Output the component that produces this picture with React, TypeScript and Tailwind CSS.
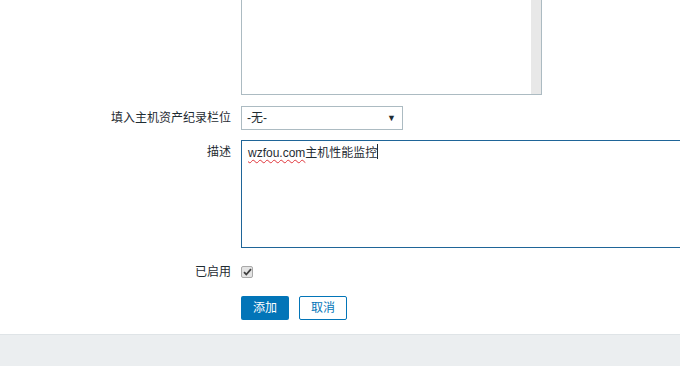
import React from "react";

const font = { fontFamily: '"Liberation Sans", Arial, "Noto Sans CJK SC", sans-serif' };

function Row({ label, children, labelClass = "" }: { label?: string; children: React.ReactNode; labelClass?: string }) {
  return (
    <div className="flex">
      <div className={`w-[241px] shrink-0 pr-[10px] text-right text-[12px] text-[#1f2c33] ${labelClass}`}>{label}</div>
      <div className="flex-1 min-w-0">{children}</div>
    </div>
  );
}

export default function App() {
  return (
    <div className="w-[680px] h-[366px] overflow-hidden bg-white flex flex-col" style={font}>
      <div className="flex flex-col">
        {/* scrolled textarea (top cut off) */}
        <Row>
          <div className="w-[301px] h-[95px] border-x border-b border-[#acbbc2] bg-white flex justify-end">
            <div className="w-[10px] h-full bg-[#e8e8e8]" />
          </div>
        </Row>

        <div className="h-[11px]" />
        <Row label="填入主机资产纪录栏位" labelClass="leading-[24px]">
          <div className="w-[162px] h-[24px] border border-[#acbbc2] bg-white flex items-center justify-between pl-[5px] pr-[6px] text-[12px] text-[#1f2c33]">
            <span>-无-</span>
            <span className="text-[9px] leading-none">▼</span>
          </div>
        </Row>

        <div className="h-[10px]" />
        <Row label="描述" labelClass="pt-[3px]">
          <div className="h-[108px] border border-r-0 border-[#1f6598] bg-white pl-[6px] pt-[3px] text-[12px] text-[#1f2c33] flex items-start">
            <span className="underline decoration-wavy decoration-[#e0353b] decoration-1 underline-offset-2">wzfou.com</span>
            <span>主机性能监控</span>
            <span className="w-px h-[15px] bg-[#1f2c33]" />
          </div>
        </Row>

        <div className="h-[18px]" />
        <Row label="已启用" labelClass="leading-[12px]">
          <div className="w-[12px] h-[12px] rounded-[2px] border border-[#a9a9a9] bg-[#e4e4e4] flex items-center justify-center">
            <svg width="9" height="8" viewBox="0 0 9 8">
              <path d="M1 4.2 L3.3 6.5 L8 1.2" fill="none" stroke="#404040" strokeWidth="1.8" />
            </svg>
          </div>
        </Row>

        <div className="h-[18px]" />
        <Row>
          <div className="flex gap-[10px]">
            <button className="w-[48px] h-[24px] rounded-[2px] bg-[#0275b8] text-white text-[12px]">添加</button>
            <button className="w-[48px] h-[24px] rounded-[2px] border border-[#0275b8] bg-white text-[#0275b8] text-[12px]">取消</button>
          </div>
        </Row>
      </div>

      <div className="mt-[14px] flex-1 bg-[#ebeef0] border-t border-[#dfe4e7]" />
    </div>
  );
}
